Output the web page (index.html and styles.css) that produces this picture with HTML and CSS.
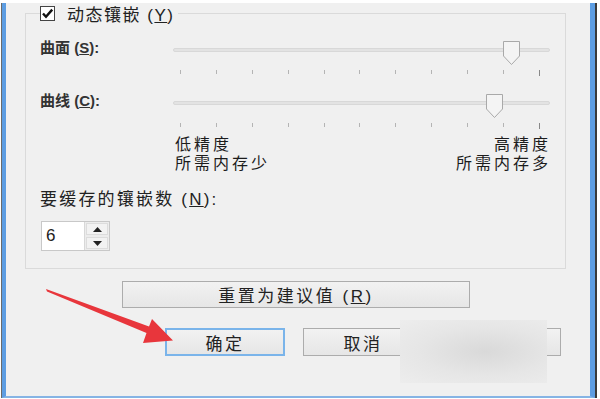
FILE: index.html
```html
<!DOCTYPE html>
<html lang="zh-CN">
<head>
  <meta charset="UTF-8">
  <title>镶嵌设置</title>
  <link rel="stylesheet" href="styles.css">
</head>
<body>

<div class="window">
  <fieldset class="group">
    <legend class="group-title">
      <svg class="check" width="15" height="15" viewBox="0 0 15 15">
        <rect x="0.5" y="0.5" width="14" height="14" fill="#fff" stroke="#444"/>
        <path d="M3 7.5 L6 10.8 L12.2 3.6" fill="none" stroke="#111" stroke-width="2.4"/>
      </svg>
      <span>动态镶嵌 (<u>Y</u>)</span>
    </legend>

    <div class="slider-row">
      <span class="label">曲面 (<u>S</u>):</span>
      <div class="slider">
        <div class="track"></div>
        <svg class="thumb" style="left: 329px" width="19" height="26" viewBox="0 0 19 26">
          <path d="M1.5 1.5 H17.5 V16 L9.5 24.5 L1.5 16 Z" fill="#f4f4f4" stroke="#a9a9a9"/>
        </svg>
        <div class="ticks"><i></i><i></i><i></i><i></i><i></i><i></i><i></i><i></i><i></i><i></i><i></i></div>
      </div>
    </div>

    <div class="slider-row">
      <span class="label">曲线 (<u>C</u>):</span>
      <div class="slider">
        <div class="track"></div>
        <svg class="thumb" style="left: 312px" width="19" height="26" viewBox="0 0 19 26">
          <path d="M1.5 1.5 H17.5 V16 L9.5 24.5 L1.5 16 Z" fill="#f4f4f4" stroke="#a9a9a9"/>
        </svg>
        <div class="ticks"><i></i><i></i><i></i><i></i><i></i><i></i><i></i><i></i><i></i><i></i><i></i></div>
      </div>
    </div>

    <div class="scale-labels">
      <div class="low">
        <div>低精度</div>
        <div>所需内存少</div>
      </div>
      <div class="high">
        <div>高精度</div>
        <div>所需内存多</div>
      </div>
    </div>

    <div class="cache-label">要缓存的镶嵌数 (<u>N</u>):</div>
    <div class="spinner">
      <span class="spin-value">6</span>
      <div class="spin-btns">
        <span class="spin-btn"><svg width="9" height="5" viewBox="0 0 9 5"><path d="M0 5 L4.5 0 L9 5 Z" fill="#222"/></svg></span>
        <span class="spin-btn"><svg width="9" height="5" viewBox="0 0 9 5"><path d="M0 0 L4.5 5 L9 0 Z" fill="#222"/></svg></span>
      </div>
    </div>
  </fieldset>

  <div class="reset-row">
    <button class="btn reset">重置为建议值 (<u>R</u>)</button>
  </div>

  <div class="actions">
    <button class="btn ok">确定</button>
    <button class="btn">取消</button>
    <button class="btn">应用</button>
  </div>

  <div class="smudge"></div>

  <svg class="arrow" width="200" height="360" viewBox="0 0 200 360">
    <polygon points="46,286 149,323.5 152,316 173,337.5 143,340 146.5,330 47,288.5" fill="#e8363c"/>
  </svg>
</div>

</body>
</html>
```

FILE: styles.css
```css
body {
  margin: 0;
  background: #fff;
  font-family: "Liberation Sans", "Noto Sans CJK SC", sans-serif;
  color: #222;
}

.window {
  position: relative;
  margin-left: 2px;
  width: 584px;
  height: 393px;
  background: #f0f0f0;
  border-left: 4px solid #5d9de2;
  border-right: 5px solid #5d9de2;
  border-bottom: 2px solid #86b4e4;
  box-shadow: -1px 0 0 #6a6a6a, 2px 0 0 #3a3a3a;
}

.group {
  margin: 3px 24px 0 19px;
  padding: 0 14px 17px 14px;
  border: 1px solid #dadada;
}

.group-title {
  display: flex;
  align-items: center;
  padding: 0 4px 0 0;
  height: 20px;
  font-size: 17px;
  letter-spacing: 1.5px;
}

.check {
  margin-right: 12px;
}

.slider-row {
  display: flex;
  margin-top: 17px;
}

.label {
  width: 133px;
  line-height: 16px;
  font-size: 15px;
  font-weight: bold;
  color: #333;
}

.slider {
  position: relative;
  width: 377px;
  height: 36px;
}

.track {
  margin-top: 8px;
  height: 2px;
  background: #e3e3e3;
  border: 1px solid #d8d8d8;
  border-radius: 2px;
}

.thumb {
  position: absolute;
  top: 0;
}

.ticks {
  display: flex;
  justify-content: space-between;
  margin: 18px 10px 0 7px;
}

.ticks i {
  width: 1px;
  height: 4px;
  background: #b4b4b4;
}

.ticks i:last-child {
  height: 6px;
  background: #888;
}

.scale-labels {
  display: flex;
  justify-content: space-between;
  margin: 6px 0 0 135px;
  font-size: 16px;
  line-height: 19px;
  letter-spacing: 3px;
  color: #1c1c1c;
}

.high {
  text-align: right;
}

.cache-label {
  margin-top: 17px;
  font-size: 17px;
  line-height: 20px;
  letter-spacing: 2.2px;
}

.spinner {
  display: flex;
  margin: 11px 0 0 1px;
  width: 67px;
  height: 28px;
  border: 1px solid #c8c8c8;
  background: #fff;
}

.spin-value {
  flex: 1;
  padding-left: 4px;
  font-size: 17px;
  line-height: 28px;
}

.spin-btns {
  display: flex;
  flex-direction: column;
  width: 24px;
  border-left: 1px solid #d8d8d8;
  background: #ececec;
}

.spin-btn {
  flex: 1;
  display: flex;
  align-items: center;
  justify-content: center;
  margin: 1px;
  border: 1px solid #dcdcdc;
  background: #f2f2f2;
}

.btn {
  font-family: inherit;
  font-size: 17px;
  letter-spacing: 2.5px;
  color: #222;
  border: 1px solid #acacac;
  background: linear-gradient(#f2f2f2, #e6e6e6);
  padding: 0;
}

.reset-row {
  margin: 12px 0 0 116px;
}

.reset {
  width: 348px;
  height: 27px;
}

.actions {
  display: flex;
  gap: 18px;
  margin: 20px 0 0 159px;
}

.actions .btn {
  width: 120px;
  height: 28px;
}

.ok {
  border: 2px solid #7ab4ea;
}

.smudge {
  position: absolute;
  left: 394px;
  top: 317px;
  width: 147px;
  height: 63px;
  background: radial-gradient(ellipse at 58% 50%, #d9d9d9, #e6e6e6 55%, #ededed);
}

.arrow {
  position: absolute;
  left: -6px;
  top: 0;
}
```
